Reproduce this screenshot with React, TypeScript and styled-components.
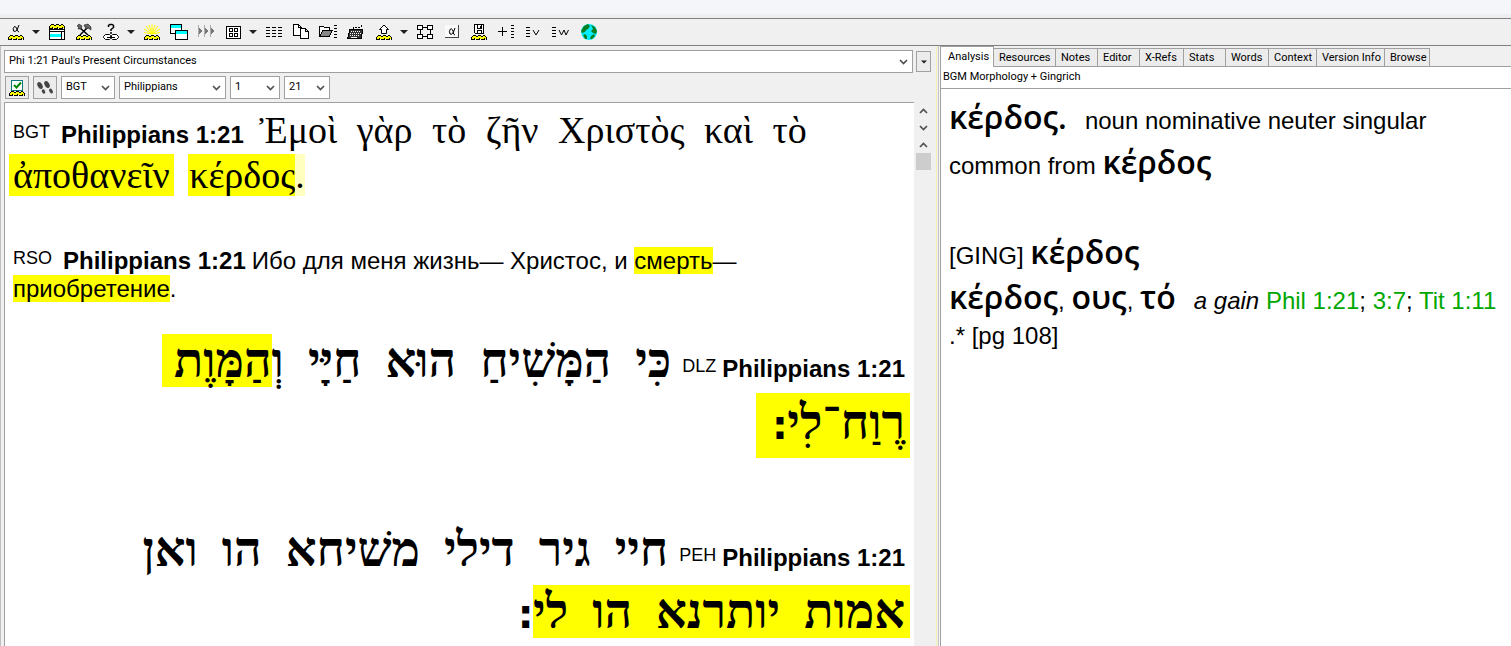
import React from "react";
import styled, { createGlobalStyle, css } from "styled-components";

const Global = createGlobalStyle`
  *, *::before, *::after { box-sizing: border-box; }
  body { margin: 0; font-family: Roboto, "Liberation Sans", Arial, sans-serif; font-size: 11px; color: #000; }
  button, select { font: inherit; color: inherit; }
`;

const line = "#a0a0a0";
const face = "#f0f0f0";

const Shell = styled.div`
  display: flex;
  flex-direction: column;
  height: 100vh;
  overflow: hidden;
  background: ${face};
`;
const TitleStrip = styled.div`
  flex: none;
  height: 18px;
  background: linear-gradient(#f4f6f9 78%, #eeeef0 78%);
`;
const Toolbar = styled.div`
  flex: none;
  display: flex;
  align-items: center;
  height: 28px;
  padding-left: 2px;
  border-top: 1px solid #808080;
  border-bottom: 1px solid #808080;
  background: ${face};
`;
const ToolButton = styled.button<{ $spaced?: boolean }>`
  display: flex;
  justify-content: center;
  align-items: center;
  width: 27px;
  height: 24px;
  padding: 0;
  border: 0;
  background: none;
  margin-left: ${(p) => (p.$spaced ? "2px" : "0")};
`;
const DropButton = styled(ToolButton)`
  width: 14px;
`;
const Glyph = styled.svg`
  display: block;
  flex: none;
  overflow: visible;
`;

const Workspace = styled.div`
  flex: 1;
  min-height: 0;
  display: grid;
  grid-template-columns: minmax(0, 937fr) 3px minmax(0, 571fr);
`;
const BrowsePane = styled.section`
  min-height: 0;
  display: flex;
  flex-direction: column;
  padding: 4px 4px 0 3px;
  border-left: 1px solid #c0c0c0;
  border-right: 1px solid #f3f0b4;
`;
const Splitter = styled.div`
  background: #c4c4c4;
  border-left: 1px solid ${face};
  border-right: 1px solid #f8f8f8;
`;
const CommandRow = styled.div`
  display: flex;
  align-items: center;
  gap: 3px;
  padding-right: 1px;
`;
const SelectBox = styled.label<{ $width?: number; $grow?: boolean }>`
  display: grid;
  align-items: center;
  flex: ${(p) => (p.$grow ? "1" : "none")};
  width: ${(p) => (p.$width ? p.$width + "px" : "auto")};
  height: 23px;
  border: 1px solid ${line};
  background: #fff;
  > * { grid-area: 1 / 1; }
  > svg { justify-self: end; margin-right: 4px; pointer-events: none; }
`;
const Select = styled.select`
  appearance: none;
  width: 100%;
  height: 21px;
  padding: 0 0 2px 4px;
  border: 0;
  background: none;
`;
const SquareButton = styled.button<{ $small?: boolean }>`
  display: flex;
  align-items: center;
  justify-content: center;
  width: ${(p) => (p.$small ? "15px" : "24px")};
  height: ${(p) => (p.$small ? "21px" : "23px")};
  padding: 0;
  border: 1px solid ${line};
  background: #ececec;
`;
const PickerRow = styled.div`
  display: flex;
  gap: 4px;
  padding: 3px 0 3px 1px;
`;
const TextFrame = styled.div`
  flex: 1;
  min-height: 0;
  display: flex;
  gap: 2px;
`;
const VersePage = styled.div`
  flex: 1;
  min-width: 0;
  padding-top: 5px;
  overflow: hidden;
  border-top: 1px solid ${line};
  border-left: 1px solid ${line};
  background: #fff;
`;
const ScrollRail = styled.div`
  display: flex;
  flex-direction: column;
  width: 15px;
  margin-right: 1px;
`;
const ScrollButton = styled.button`
  display: flex;
  align-items: center;
  justify-content: center;
  height: 17px;
  padding: 0;
  border: 0;
  background: none;
`;
const Thumb = styled.div`
  height: 17px;
  background: #cdcdcd;
`;

const Word = styled.span``;
const Verse = styled.p<{ $size: number; $line: number; $rtl?: boolean; $gap: number }>`
  margin: 0 0 ${(p) => p.$gap}px;
  padding: 0 9px 0 8px;
  direction: ${(p) => (p.$rtl ? "rtl" : "ltr")};
  font-family: "Liberation Serif", "Times New Roman", serif;
  font-size: ${(p) => p.$size}px;
  font-weight: ${(p) => (p.$rtl ? 700 : 400)};
  line-height: ${(p) => p.$line}px;
  white-space: nowrap;
  ${Word} {
    margin-inline-end: ${(p) => (p.$rtl ? 12 : 10)}px;
  }
`;
const small = css`
  font-family: "Liberation Sans", Arial, sans-serif;
  line-height: 1;
`;
const Version = styled.span`
  ${small}
  font-size: 18px;
  font-weight: 400;
  vertical-align: 5px;
  margin-inline-end: 11px;
`;
const Reference = styled.b`
  ${small}
  font-size: 24px;
  margin-inline-end: 6px;
  unicode-bidi: isolate;
`;
const Plain = styled.span`
  ${small}
  font-size: 24px;
`;
const Hit = styled.mark<{ $lead?: number; $tail?: number; $tall?: boolean }>`
  color: inherit;
  background: #ff0;
  padding-block: ${(p) => (p.$tall ? "3px 9px" : "0")};
  padding-inline: ${(p) => p.$lead ?? 0}px ${(p) => p.$tail ?? 0}px;
  margin-inline: -${(p) => p.$lead ?? 0}px -${(p) => p.$tail ?? 0}px;
`;
const PaleHit = styled(Hit)`
  background: #ffffc0;
`;
const VerseEnd = styled.span`
  font-family: "DejaVu Sans", sans-serif;
  font-size: 40px;
  line-height: 1;
`;

const AnalysisPane = styled.section`
  min-height: 0;
  display: flex;
  flex-direction: column;
`;
const Tabs = styled.div`
  flex: none;
  display: flex;
  align-items: flex-end;
  height: 21px;
  border-bottom: 1px solid ${line};
`;
const Tab = styled.button<{ $active?: boolean; $width: number }>`
  width: ${(p) => p.$width}px;
  height: ${(p) => (p.$active ? 21 : 18)}px;
  margin-bottom: ${(p) => (p.$active ? -1 : 0)}px;
  padding: 0 0 ${(p) => (p.$active ? 2 : 0)}px ${(p) => (p.$active ? 7 : 5)}px;
  border: 1px solid ${line};
  border-left-width: ${(p) => (p.$active ? 1 : 0)}px;
  border-bottom: 0;
  background: ${(p) => (p.$active ? "#fff" : "#ececec")};
  text-align: left;
  white-space: nowrap;
`;
const Source = styled.div`
  flex: none;
  height: 22px;
  padding: 0 2px;
  line-height: 20px;
  background: #fff;
  border-left: 1px solid ${line};
  border-bottom: 1px solid ${line};
`;
const Entry = styled.article`
  flex: 1;
  padding: 9px 8px;
  border-left: 1px solid ${line};
  background: #fff;
  font-family: "Liberation Sans", Arial, sans-serif;
  font-size: 24px;
  line-height: 45px;
  white-space: nowrap;
`;
const EntryLine = styled.p<{ $tight?: boolean }>`
  margin: 0;
  min-height: 45px;
  line-height: ${(p) => (p.$tight ? 26 : 45)}px;
`;
const Lemma = styled.b`
  font-family: "Open Sans", "Noto Sans", sans-serif;
  font-weight: 600;
  font-size: 32px;
  line-height: 1;
`;
const Verb = styled.a`
  color: #00a800;
  text-decoration: none;
`;
const Wide = styled.span`
  margin-left: 18px;
`;

const Chevron = ({ up }: { up?: boolean }) => (
  <Glyph width="9" height="6" viewBox="0 0 9 6">
    <path d={up ? "M1 5 L4.5 1.5 L8 5" : "M1 1 L4.5 4.5 L8 1"} fill="none" stroke="#505050" strokeWidth="1.7" />
  </Glyph>
);
const Triangle = ({ w = 8 }: { w?: number }) => (
  <Glyph width={w} height="4" viewBox="0 0 8 4">
    <path d="M0 0h8L4 4z" fill="#202020" />
  </Glyph>
);

const Coil = ({ y = 11 }: { y?: number }) => (
  <g transform={`translate(0 ${y})`}>
    <path d="M1 1h14v3h-14zM0 3h16v1h-16z" fill="#ff0" stroke="none" />
    <path d="M2 .5h3M7 .5h3M12 .5h2M1 1.5h1M5 1.5h2M10 1.5h2M14 1.5h1M0 2.5h1M15 2.5h1M0 3.5h1M3 3.5h1M8 3.5h1M13 3.5h1M15 3.5h1M0 4.5h4M5 4.5h4M10 4.5h4M15 4.5h1" stroke="#000" />
  </g>
);
const Icon = ({ w = 16, children }: { w?: number; children: React.ReactNode }) => (
  <Glyph width={w} height="16" viewBox={`0 0 ${w} 16`} fill="none" stroke="#000" shapeRendering="crispEdges">
    {children}
  </Glyph>
);
const icons: Record<string, React.ReactNode> = {
  alpha: <Icon><path d="M11 1L9 6Q7 8.500 5.500 7Q4.500 4 6.500 2.500Q8.500 2 9.500 7L11 8" shapeRendering="auto" /><Coil /></Icon>,
  search: <Icon><Coil y={0} /><path d="M.5 5.500h15v10h-15zM.5 7.500h15M12.500 7.500v8" fill="#fff" /><path d="M1 8h11v2H1zM1 13h11v2H1z" fill="#fff" stroke="none" /><path d="M1 10h11v3H1z" fill="#0ff" stroke="none" /></Icon>,
  tools: <Icon><path d="M3 3L12 11M4 11L12 3" shapeRendering="auto" strokeWidth="1.500" /><path d="M1 2L3 0L6 2L5 5L2 5L3 3zM8 1L12 0L15 3V6L12 4L10 5z" fill="#666" shapeRendering="auto" strokeWidth=".5" /><Coil /></Icon>,
  help: <Icon><path d="M5.500 3V1.500L7 .5H9L10.500 1.500V3.500L8 5.500V7M8 8v2" shapeRendering="auto" strokeWidth="1.500" /><path d="M2.500 10.500h4l1 1v3l-1 1h-4l-2-2v-1zM9.500 10.500h4l2 2v1l-2 2h-4l-1-1v-3z" fill="#fff" shapeRendering="auto" /><path d="M4 13.500h8" /></Icon>,
  rays: <Icon><path d="M8 10V0M8 10L5 1M8 10L11 1M8 10L2 2M8 10L14 2M8 10L0 5M8 10L16 5M8 10L0 8.500M8 10L16 8.500" stroke="#ff0" shapeRendering="auto" /><Coil /></Icon>,
  cascade: <Icon w={18}><path d="M.5 .5h11v9h-11z" fill="#fff" /><path d="M1 1h10v3H1z" fill="#0ff" stroke="none" /><path d="M5.500 6.500h12v9h-12z" fill="#fff" /><path d="M6 7h11v3H6z" fill="#0ff" stroke="none" /></Icon>,
  skip: <Icon><path d="M.5 1v12M6.500 1v12M12.500 1v12" stroke="#aaa" /><path d="M1 4l3 3L1 10zM7 4l3 3L7 10zM13 4l3 3L13 10z" fill="#777" stroke="none" /></Icon>,
  grid: <Icon><path d="M1.500 2.500h14v12h-14z" fill="#fff" /><path d="M4.500 4.500h3v3h-3zM9.500 4.500h3v3h-3zM4.500 9.500h3v3h-3zM9.500 9.500h3v3h-3z" /></Icon>,
  columns: <Icon><path d="M0 3.500h16M0 6.500h16M0 9.500h16M0 12.500h16" strokeDasharray="4 2" /></Icon>,
  copy: <Icon><path d="M.5 .5h5l3 3v8h-8zM5.500 .5v3h3" fill="#fff" /><path d="M7.500 4.500h5l3 3v7h-8zM12.500 4.500v3h3" fill="#fff" /></Icon>,
  open: <Icon w={18}><path d="M.5 12.500v-10h4l1 1h5v3" fill="#fff" /><path d="M.5 12.500L4 6.500h9.500L10 12.500z" fill="#888" /><path d="M15 1.500h3M15 4.500h3M15 7.500h3M15 10.500h3M15 13.500h3" /></Icon>,
  keyboard: <Icon><path d="M14.500 1v1.500M13 3.500H6.500V5" strokeDasharray="2 1" /><path d="M3 5.500h12.500l-1 9H.5z" fill="#333" /><path d="M4 7.500h10M3 9.500h11M3 11.500h10" stroke="#fff" strokeDasharray="1 1" /><path d="M4 13.500h6" stroke="#fff" /></Icon>,
  load: <Icon><path d="M8 1L12.500 5.500H10.500V9.500H5.500V5.500H3.500z" fill="#fff" shapeRendering="auto" /><Coil /></Icon>,
  diagram: <Icon><path d="M.5 1.500h5v4h-5zM10.500 1.500h5v4h-5zM.5 10.500h5v4h-5zM10.500 10.500h5v4h-5z" fill="#fff" /><path d="M6 3.500h4M6 12.500h4M3 6v4M13 6v4" /></Icon>,
  font: <Icon w={14}><path d="M0 1h14v13H0z" fill="#fafafa" stroke="none" /><path d="M13.500 1v13M0 13.500h14" stroke="#444" /><path d="M10 4L8.500 8Q6.500 11.500 5 10Q3.500 7 5.500 5Q8 4 8.500 10L10 11" shapeRendering="auto" /></Icon>,
  save: <Icon><path d="M3.500 .5h9v9h-8l-1-1z" fill="#fff" /><path d="M6.500 .5v4h4v-4M6.500 9.500v-3h4v3M9 2v2" /><Coil /></Icon>,
  add: <Icon><path d="M0 7.500h9M4.500 3v9M13 1.500h3M13 4.500h3M13 7.500h3M13 10.500h3M13 13.500h3" /></Icon>,
  listV: <Icon><path d="M1 3.500h4M1 6.500h4M1 9.500h4M1 12.500h4" /><path d="M8 6L11 11L14 6" shapeRendering="auto" /></Icon>,
  listW: <Icon><path d="M0 3.500h4M0 6.500h4M0 9.500h4M0 12.500h4" /><path d="M7 6L9.500 11L12 6L14 11L16.500 6" shapeRendering="auto" /></Icon>,
  globe: <Icon><circle cx="8" cy="8" r="8" fill="#0ef" stroke="none" shapeRendering="auto" /><path d="M3 2L7 0L9 2L7 5L5 6L4 8L1 9L0 7zM10 1L14 3L16 7L15 10L12 9L10 7L12 5zM2 11L4 10L6 12L6 15L4 15zM10 12L13 10L14 12L11 15L9 15z" fill="#0a8020" stroke="none" shapeRendering="auto" /></Icon>,
};

const tools: { id: string; name: string; drop?: boolean; spaced?: boolean }[] = [
  { id: "alpha", name: "Greek", drop: true },
  { id: "search", name: "Search" },
  { id: "tools", name: "Tools" },
  { id: "help", name: "Help", drop: true },
  { id: "rays", name: "Highlight" },
  { id: "cascade", name: "Windows" },
  { id: "skip", name: "Skip" },
  { id: "grid", name: "Parallel", drop: true },
  { id: "columns", name: "Columns" },
  { id: "copy", name: "Copy" },
  { id: "open", name: "Open" },
  { id: "keyboard", name: "Keyboard" },
  { id: "load", name: "Load", drop: true, spaced: true },
  { id: "diagram", name: "Diagram" },
  { id: "font", name: "Font" },
  { id: "save", name: "Save" },
  { id: "add", name: "Add list" },
  { id: "listV", name: "Verse list" },
  { id: "listW", name: "Word list" },
  { id: "globe", name: "Web", spaced: true },
];

const tabs: [string, number][] = [
  ["Analysis", 54], ["Resources", 62], ["Notes", 42], ["Editor", 42], ["X-Refs", 44],
  ["Stats", 42], ["Words", 43], ["Context", 48], ["Version Info", 68], ["Browse", 45],
];

const Picker = ({ name, value, width, grow }: { name: string; value: string; width?: number; grow?: boolean }) => (
  <SelectBox $width={width} $grow={grow}>
    <Select aria-label={name} defaultValue={value}>
      <option>{value}</option>
    </Select>
    <Chevron />
  </SelectBox>
);

const Words = ({ text }: { text: string }) => (
  <>
    {text.split(" ").map((w, i) => (
      <React.Fragment key={i}>
        {i > 0 && " "}
        <Word>{w}</Word>
      </React.Fragment>
    ))}
  </>
);

export default function App() {
  return (
    <Shell>
      <Global />
      <TitleStrip />
      <Toolbar role="toolbar">
        {tools.map((t) => (
          <React.Fragment key={t.id}>
            <ToolButton aria-label={t.name} $spaced={t.spaced}>{icons[t.id]}</ToolButton>
            {t.drop && <DropButton aria-label={t.name + " menu"}><Triangle /></DropButton>}
          </React.Fragment>
        ))}
      </Toolbar>
      <Workspace>
        <BrowsePane>
          <CommandRow>
            <Picker name="Verse" value="Phi 1:21 Paul's Present Circumstances" grow />
            <SquareButton $small aria-label="History"><Triangle w={6} /></SquareButton>
          </CommandRow>
          <PickerRow>
            <SquareButton aria-label="Options">
              <Glyph width="16" height="18" viewBox="0 0 16 18" fill="none" shapeRendering="crispEdges">
                <path d="M2.500 1.500h11v10h-11z" fill="#fff" stroke="#087878" />
                <path d="M5 6L7.500 8.500L12 3.500" stroke="#080" strokeWidth="2" shapeRendering="auto" />
                <Coil y={12} />
              </Glyph>
            </SquareButton>
            <SquareButton aria-label="Follow">
              <Glyph width="16" height="14" viewBox="0 0 16 14" fill="#444">
                <ellipse cx="3" cy="4.500" rx="2.300" ry="3.700" transform="rotate(-30 3 4.500)" />
                <ellipse cx="6.500" cy="10.500" rx="1.600" ry="2.200" transform="rotate(-30 6.500 10.500)" />
                <ellipse cx="10" cy="3.500" rx="2.300" ry="3.700" transform="rotate(-30 10 3.500)" />
                <ellipse cx="14" cy="10" rx="1.700" ry="2.600" transform="rotate(-30 14 10)" />
              </Glyph>
            </SquareButton>
            <Picker name="Version" value="BGT" width={54} />
            <Picker name="Book" value="Philippians" width={107} />
            <Picker name="Chapter" value="1" width={50} />
            <Picker name="Verse number" value="21" width={46} />
          </PickerRow>
          <TextFrame>
            <VersePage>
              <Verse lang="el" $size={38} $line={45} $gap={49}>
                <Version>BGT</Version><Reference>Philippians 1:21</Reference> <Words text="Ἐμοὶ γὰρ τὸ ζῆν Χριστὸς καὶ τὸ" /><br />
                <Word><Hit $lead={4} $tail={4}>ἀποθανεῖν</Hit></Word> <Hit $lead={1}>κέρδος</Hit><PaleHit>.</PaleHit>
              </Verse>
              <Verse lang="ru" $size={24} $line={28} $gap={27}>
                <Version>RSO</Version><Reference>Philippians 1:21</Reference>
                <Plain>Ибо для меня жизнь— Христос, и <Hit>смерть</Hit>—<br /><Hit>приобретение</Hit>.</Plain>
              </Verse>
              <Verse lang="he" $size={48} $line={62} $gap={65} $rtl>
                <Reference>Philippians 1:21</Reference><Version>DLZ</Version><Words text="כִּי הַמָּשִׁיחַ הוּא חַיָּי" /> וְ<Hit $tail={12}>הַמָּוֶת</Hit><br />
                <Hit $lead={5} $tail={16} $tall>רֶוַח־לִי<VerseEnd>׃</VerseEnd></Hit>
              </Verse>
              <Verse lang="arc" $size={48} $line={62} $gap={0} $rtl>
                <Reference>Philippians 1:21</Reference><Version>PEH</Version><Words text="חיי גיר דילי משׁיחא הו ואן" /><br />
                <Hit $lead={5}><Words text="אמות יותרנא הו" /> לי</Hit><VerseEnd>׃</VerseEnd>
              </Verse>
            </VersePage>
            <ScrollRail>
              <ScrollButton aria-label="Previous verse"><Chevron up /></ScrollButton>
              <ScrollButton aria-label="Next verse"><Chevron /></ScrollButton>
              <ScrollButton aria-label="Scroll up"><Chevron up /></ScrollButton>
              <Thumb />
            </ScrollRail>
          </TextFrame>
        </BrowsePane>
        <Splitter />
        <AnalysisPane>
          <Tabs role="tablist">
            {tabs.map(([name, width], i) => (
              <Tab key={name} role="tab" aria-selected={i === 0} $active={i === 0} $width={width}>{name}</Tab>
            ))}
          </Tabs>
          <Source>BGM Morphology + Gingrich</Source>
          <Entry>
            <EntryLine><Lemma>κέρδος.</Lemma><Wide>noun nominative neuter singular</Wide></EntryLine>
            <EntryLine>common from <Lemma>κέρδος</Lemma></EntryLine>
            <EntryLine />
            <EntryLine>[GING] <Lemma>κέρδος</Lemma></EntryLine>
            <EntryLine>
              <Lemma>κέρδος</Lemma>, <Lemma>ους</Lemma>, <Lemma>τό</Lemma><Wide><i>a gain</i> <Verb href="#phil">Phil 1:21</Verb>; <Verb href="#phil3">3:7</Verb>; <Verb href="#tit">Tit 1:11</Verb></Wide>
            </EntryLine>
            <EntryLine $tight>.* [pg 108]</EntryLine>
          </Entry>
        </AnalysisPane>
      </Workspace>
    </Shell>
  );
}
